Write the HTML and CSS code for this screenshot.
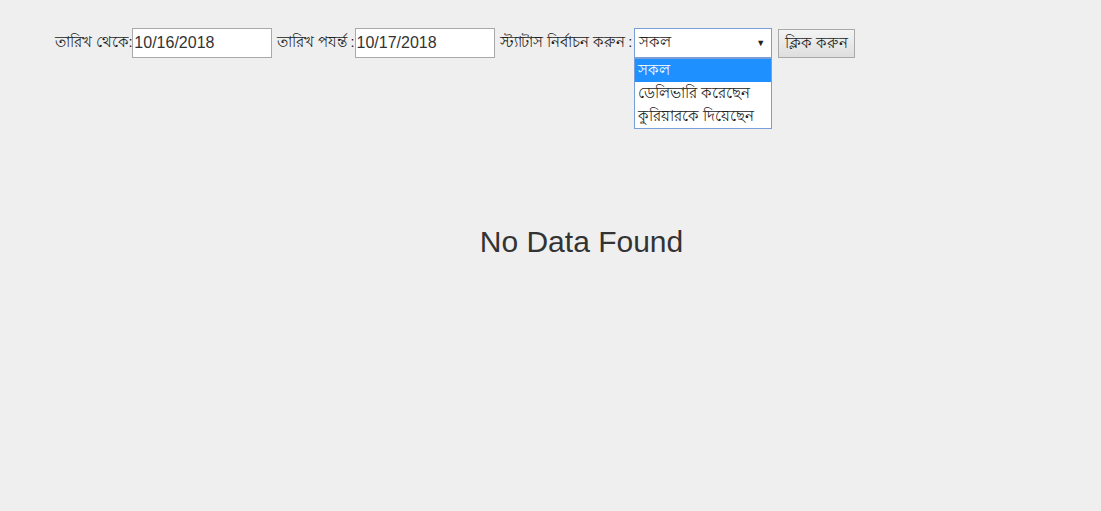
FILE: index.html
```html
<!DOCTYPE html>
<html>
<head>
<meta charset="utf-8">
<link rel="stylesheet" href="styles.css">
</head>
<body>
<div class="page">
  <form class="filters">
    <label class="lbl">তারিখ থেকে:</label><input class="date" type="text" value="10/16/2018">
    <label class="lbl gap">তারিখ পযর্ন্ত :</label><input class="date" type="text" value="10/17/2018">
    <label class="lbl gap">স্ট্যাটাস নির্বাচন করুন :</label>
    <div class="selwrap">
      <div class="select"><span>সকল</span><span class="arrow">▼</span></div>
      <ul class="options">
        <li class="sel">সকল</li>
        <li>ডেলিভারি করেছেন</li>
        <li>কুরিয়ারকে দিয়েছেন</li>
      </ul>
    </div>
    <button class="btn" type="button">ক্লিক করুন</button>
  </form>
  <div class="empty">No Data Found</div>
</div>
</body>
</html>
```
FILE: styles.css
```css
html, body { margin: 0; padding: 0; background: #efefef; }
body { font-family: "Liberation Sans", Arial, "Noto Sans", sans-serif; color: #333; font-size: 14px; }
.page { padding: 28px 0 0 55px; }
.filters { display: flex; align-items: center; height: 30px; }
.lbl { font-size: 14.5px; color: #222; letter-spacing: -0.1px; }
.gap { margin-left: 5px; }
.date {
  box-sizing: border-box; width: 140px; height: 30px; margin: 0;
  border: 1px solid #a9a9a9; background: #fff; padding: 0 1px;
  font-family: "Liberation Sans", Arial, sans-serif; font-size: 16px; color: #333;
}
.selwrap { position: relative; margin-left: 2px; }
.select {
  box-sizing: border-box; width: 138px; height: 30px; border: 1px solid #7a9fd8;
  background: #fff; display: flex; align-items: center; justify-content: space-between;
  padding: 0 6px 0 4px; font-size: 14.5px; color: #222;
}
.arrow { font-size: 9px; color: #222; }
.options {
  position: absolute; left: 0; top: 30px; margin: 0; padding: 0; list-style: none;
  box-sizing: border-box; width: 138px; background: #fff; border: 1px solid #7a9fd8;
}
.options li { height: 23px; line-height: 22px; padding-left: 3px; font-size: 14.5px; color: #222; white-space: nowrap; }
.options li.sel { background: #1e90ff; color: #fff; }
.btn {
  box-sizing: border-box; margin-left: 6px; height: 29px; width: 77px;
  border: 1px solid #a9a9a9; background: linear-gradient(#f4f4f4, #dedede);
  font-family: "Liberation Sans", Arial, sans-serif; font-size: 15px; color: #222; padding: 0;
}
.empty { margin-top: 167px; text-align: center; padding-left: 7px; font-size: 30px; color: #333; }
```
